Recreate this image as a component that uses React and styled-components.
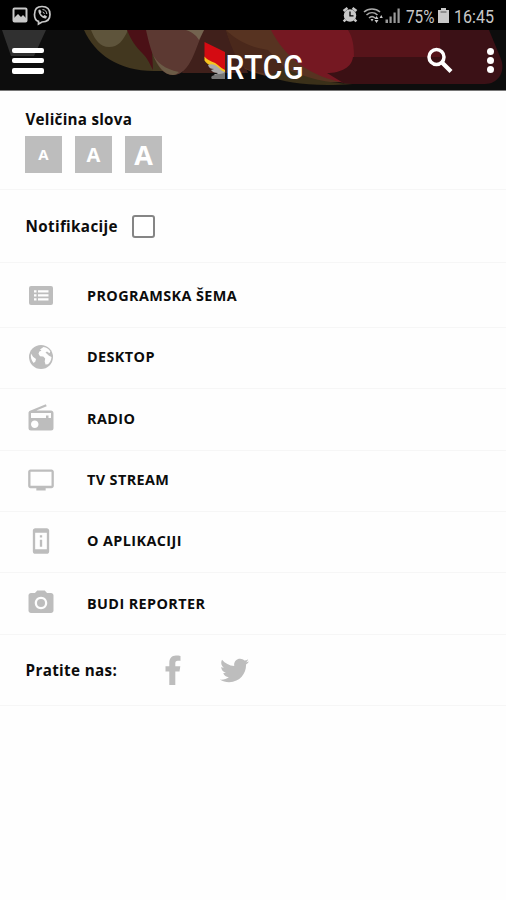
import React, { useState } from 'react'
import styled, { createGlobalStyle } from 'styled-components'
import { MdRadio, MdTv, MdPermDeviceInformation, MdCameraAlt } from 'react-icons/md'
import { FaTwitter } from 'react-icons/fa'

const GlobalStyle = createGlobalStyle`
  * { box-sizing:border-box; }
  body { margin:0; background:#fefefe; font-family:'Open Sans', 'Noto Sans', sans-serif; color:#0c0c0c; }
  button { font-family:inherit; border:0; padding:0; background:none; }
  svg { display:block; }
`

const Screen = styled.div`min-height:900px; background:#fefefe;`
const StatusBar = styled.div`height:30px; background:#000; display:flex; justify-content:space-between;`
const Header = styled.header`height:61px; display:grid; background:#0d0d0d; border-bottom:1px solid #777;`
const Backdrop = styled.svg`grid-area:1 / 1;`
const Toolbar = styled.div`grid-area:1 / 1; z-index:1; display:flex; height:60px; padding:0 11px 0 12px;`
const MenuButton = styled.button`display:flex; flex-direction:column; gap:5.3px; width:33px; padding-top:17.5px;`
const MenuLine = styled.span`width:32px; height:5.2px; border-radius:2px; background:#fff;`
const LogoSlot = styled.div`margin-left:158px; flex:1;`
const SearchButton = styled.button`width:28px; padding-top:17px; display:flex; align-items:flex-start; margin-right:32px;`
const MoreButton = styled.button`display:flex; flex-direction:column; gap:1.9px; padding-top:17.5px; width:8px;`
const Dot = styled.span`width:7.4px; height:7.4px; border-radius:50%; background:#fff;`
const LogoText = styled.text`font-family:Roboto, sans-serif; font-size:34px; font-weight:500; letter-spacing:1px; fill:#fff;`
const StatusText = styled.text`font-family:Roboto, sans-serif; font-size:17.5px;`

const Section = styled.section`
  height:${p => p.$height}px;
  border-bottom:1px solid #f6f6f6;
  padding-left:25px;
`
const SizeSection = styled(Section)`padding-top:18px;`
const InlineSection = styled(Section)`display:flex; align-items:center;`
const Label = styled.h2`
  margin:0;
  padding-left:0.5px;
  font-size:15.2px;
  line-height:20px;
  font-weight:700;
  letter-spacing:${p => p.$spacing}px;
  width:${p => p.$width || 'auto'};
  white-space:nowrap;
`
const Sizes = styled.div`display:flex; gap:13px; margin-top:7px;`
const SizeButton = styled.button`
  width:37px;
  height:37px;
  background:#bdbdbd;
  color:#fff;
  font-weight:700;
  font-size:${p => p.$size}px;
  line-height:37px;
`
const Checkbox = styled.button`width:23px; height:23px; border:2px solid #858585; border-radius:3px; background:${p => p.$on ? '#858585' : '#fff'};`
const Menu = styled.nav`display:flex; flex-direction:column;`
const MenuRow = styled.a`
  display:flex;
  align-items:center;
  height:${p => p.$height}px;
  padding:0 0 ${p => p.$lift}px 26px;
  border-bottom:1px solid #f6f6f6;
  font-size:14.4px;
  font-weight:700;
`
const IconBox = styled.span`display:flex; justify-content:center; width:30px; margin-right:31px; color:#bdbdbd;`
const MenuText = styled.span`letter-spacing:0.4px;`
const Social = styled.div`display:flex; align-items:center; color:#bdbdbd; gap:39px; width:max-content;`

function ListIcon() {
  return (
    <svg width="26" height="21" viewBox="0 0 26 21" fill="currentColor">
      <rect x="1" y="1" width="24" height="19" rx="2" />
      <path fill="#fefefe" d="M6 5.200h2.500v2.300H6zM6 9.200h2.500v2.300H6zM6 13.200h2.500v2.300H6zM10 5.200h10.500v2.300H10zM10 9.200h10.500v2.300H10zM10 13.200h10.500v2.300H10z" />
    </svg>
  )
}

function GlobeIcon() {
  return (
    <svg width="26" height="26" viewBox="0 0 26 26">
      <circle cx="13" cy="13" r="12" fill="currentColor" />
      <path fill="#fefefe" d="M12 5.500l3.500-2.500c3.200.6 5.300 2 6.800 4.500l-.8 1.800-2.500-1.800-1.500 1 3.500 3.200 2.500 1.300c-.2 3.200-1.500 5.500-3.500 7.200l-2.500.3-.8-3 .5-3-2-2-3.200-.2-1.500-2.500.8-2.300 2.200-.8z" />
      <path fill="#fefefe" d="M3 9.500l2 3.200 3 2.300-.6 2.500-1.800 1.500c-2.100-2.300-3.300-6-2.600-9.500z" />
    </svg>
  )
}

function SearchIcon() {
  return (
    <svg width="28" height="28" viewBox="0 0 28 28" fill="none" stroke="#fff">
      <circle cx="9.500" cy="10" r="7.500" strokeWidth="3.500" />
      <path d="M15 15.500l9 9" strokeWidth="4.200" />
    </svg>
  )
}

function FacebookIcon() {
  return (
    <svg width="16" height="31" viewBox="0 0 16 31" fill="currentColor">
      <path d="M4.300 30V16.500H.5v-5.300h3.800V8c0-4.700 2.500-7.400 6.700-7.400 1.600 0 3 .1 4.500.3v4.800h-2.700c-2 0-2.500.9-2.500 2.500v3h5l-.8 5.300h-4.200V30z" />
    </svg>
  )
}

const items = [
  { text: 'PROGRAMSKA ŠEMA', icon: <ListIcon />, height: 65, lift: 0 },
  { text: 'DESKTOP', icon: <GlobeIcon />, height: 61, lift: 3 },
  { text: 'RADIO', icon: <MdRadio size={30} />, height: 62, lift: 3 },
  { text: 'TV STREAM', icon: <MdTv size={28} />, height: 61, lift: 3 },
  { text: 'O APLIKACIJI', icon: <MdPermDeviceInformation size={28} />, height: 61, lift: 3 },
  { text: 'BUDI REPORTER', icon: <MdCameraAlt size={30} />, height: 62, lift: 1 },
]

function LeftStatus() {
  return (
    <svg width="60" height="30" fill="none" stroke="#c8c8c8">
      <rect x="13.500" y="8.500" width="13" height="13" rx="1" strokeWidth="2" />
      <path d="M14 18l4-4 3 3 2-2 3 3v3H14z" fill="#c8c8c8" stroke="none" />
      <path d="M42 6.500c5 0 8 2.300 8 8s-3 7.500-8 7.500l-3.500 2v-2.600c-3-1-4-3.500-4-7 0-5.600 2.500-7.900 7.500-7.900z" strokeWidth="1.700" />
      <path d="M38.500 10c-.8 4 4 9 7.500 8.500l1-2-2.300-1.500-1.400 1c-1.200-.5-2.200-1.500-2.700-2.700l1-1.400-1.500-2.400z" fill="#c8c8c8" stroke="none" />
      <path d="M42.500 9.500c2.800.3 4.200 1.900 4.300 4.500M42.700 12c1 .2 1.500.8 1.600 1.800" />
    </svg>
  )
}

function RightStatus() {
  return (
    <svg width="170" height="30" fill="#c8c8c8">
      <circle cx="14" cy="15.500" r="6.200" />
      <path d="M7.500 11l4-3M16.500 8l4 3M9.500 19.500l-1.800 2M18.500 19.500l1.800 2" stroke="#c8c8c8" strokeWidth="2.600" />
      <path d="M14 11.500v4.300h3.500" stroke="#000" strokeWidth="1.300" fill="none" />
      <g fill="none" stroke="#aaa" strokeWidth="1.600">
        <path d="M28 12c4.500-4 11.500-4 16 0M30.500 15c3.300-3 7.700-3 11 0M33 18c2-1.800 4-1.800 6 0" />
      </g>
      <path d="M34.500 19h3l-1.500 2.500zM38.500 19l2-3 2 3zM38.500 20h4l-2 3zM43.500 18l1.800-3 1.500 3z" />
      <path d="M49.500 19.500H52V23h-2.500zM53.500 16.500h2.200V23h-2.200zM57.500 12.500h2.200V23h-2.200zM61.500 8.500h2.200V23h-2.200z" fill="#999" />
      <StatusText x="70" y="22.500" textLength="28.500" lengthAdjust="spacingAndGlyphs">75%</StatusText>
      <path d="M105 8h5v2h3v13h-11V10h3z" />
      <path d="M104.500 12h6" stroke="#555" />
      <StatusText x="118" y="22.500" textLength="40" lengthAdjust="spacingAndGlyphs">16:45</StatusText>
    </svg>
  )
}

function HeaderArt() {
  return (
    <Backdrop width="506" height="60" viewBox="0 0 506 60">
      <path d="M2 0h44L34 26H11z" fill="#303030" />
      <path d="M84 0c11 24 34 41 70 41h54V0z" fill="#42371f" />
      <path d="M91 0h37c-5 11-10 17-19 17C100 17 95 10 91 0z" fill="#5e543b" />
      <path d="M127 0h24l2 40c-4-8-6-12-10-16C136 17 131 10 127 0z" fill="#4b1016" />
      <path d="M198 0h34l16 43h-66c6-12 12-26 16-43z" fill="#40201b" />
      <path d="M146 0h58c-8 15-13 45-31 45-15 0-22-22-27-45z" fill="#5c3932" />
      <path d="M153 25c4 7 11 14 26 17-2 2-4 3-6 3-9 0-15-9-20-20z" fill="#6b5b46" />
      <path d="M186 0h18l-5 10C196 5 192 2 186 0z" fill="#73634f" />
      <path d="M226 0h52c12 25 34 46 70 52-42 2-82-3-103-13-7-10-14-23-19-39z" fill="#573321" />
      <path d="M226 0c8 8 21 17 42 20l23 24c-22 1-39-1-49-8-7-10-12-22-16-36z" fill="#4a281b" />
      <path d="M271 0h169l22 54H350C308 47 285 27 271 0z" fill="#751822" />
      <path d="M348 0h92v28h-86c0-12-1-20-6-28z" fill="#57141a" />
      <path d="M353 27h95v27H345l-18-11c14 0 25-6 26-16z" fill="#3b1014" />
      <path d="M440 0h49l12 29c5 14-4 25-16 25h-45V0z" fill="#3b1116" />
      <path d="M285 38c20 10 42 15 68 16-40 3-68-1-84-8z" fill="#3a3019" />
    </Backdrop>
  )
}

function Logo() {
  return (
    <svg width="112" height="60" viewBox="0 0 112 60">
      <path d="M1.500 12l20.500 10v20L1.500 28z" fill="#d40b12" />
      <path d="M1.500 26.500c4 5 10 5 14 9 2 2 4 3 6.500 4.500v3.500c-4-1-6-4-9-6-4-2-8-2-11.500-7z" fill="#f7c41f" />
      <path d="M5 35c4-2 8 0 11 3 2 2 3 3 6 4v5c-6 2-9-1-11-3 2 0 3 0 4-1-3 0-6-1-7-3l3-1c-3 0-5-1-6-4z" fill="#aaa" />
      <path d="M9 46l5-2c3 0 6 0 8-2v7H9c-1-1-1-2 0-3z" fill="#777" />
      <LogoText x="22.500" y="49" textLength="79" lengthAdjust="spacingAndGlyphs">RTCG</LogoText>
    </svg>
  )
}

export default function App() {
  const [notify, setNotify] = useState(false)

  return (
    <Screen>
      <GlobalStyle />
      <StatusBar>
        <LeftStatus />
        <RightStatus />
      </StatusBar>

      <Header>
        <HeaderArt />
        <Toolbar>
          <MenuButton aria-label="Meni">
            <MenuLine />
            <MenuLine />
            <MenuLine />
          </MenuButton>
          <LogoSlot><Logo /></LogoSlot>
          <SearchButton aria-label="Pretraga"><SearchIcon /></SearchButton>
          <MoreButton aria-label="Više">
            <Dot />
            <Dot />
            <Dot />
          </MoreButton>
        </Toolbar>
      </Header>

      <SizeSection $height={99}>
        <Label $spacing={0.25}>Veličina slova</Label>
        <Sizes>
          <SizeButton $size={15}>A</SizeButton>
          <SizeButton $size={20}>A</SizeButton>
          <SizeButton $size={27}>A</SizeButton>
        </Sizes>
      </SizeSection>

      <InlineSection $height={73}>
        <Label $spacing={0.35} $width="107px">Notifikacije</Label>
        <Checkbox $on={notify} onClick={() => setNotify(!notify)} aria-label="Notifikacije" />
      </InlineSection>

      <Menu>
        {items.map(item => (
          <MenuRow key={item.text} $height={item.height} $lift={item.lift}>
            <IconBox>{item.icon}</IconBox>
            <MenuText>{item.text}</MenuText>
          </MenuRow>
        ))}
      </Menu>

      <InlineSection $height={71}>
        <Label $spacing={0.35} $width="140px">Pratite nas:</Label>
        <Social>
          <FacebookIcon />
          <FaTwitter size={29} />
        </Social>
      </InlineSection>
    </Screen>
  )
}
